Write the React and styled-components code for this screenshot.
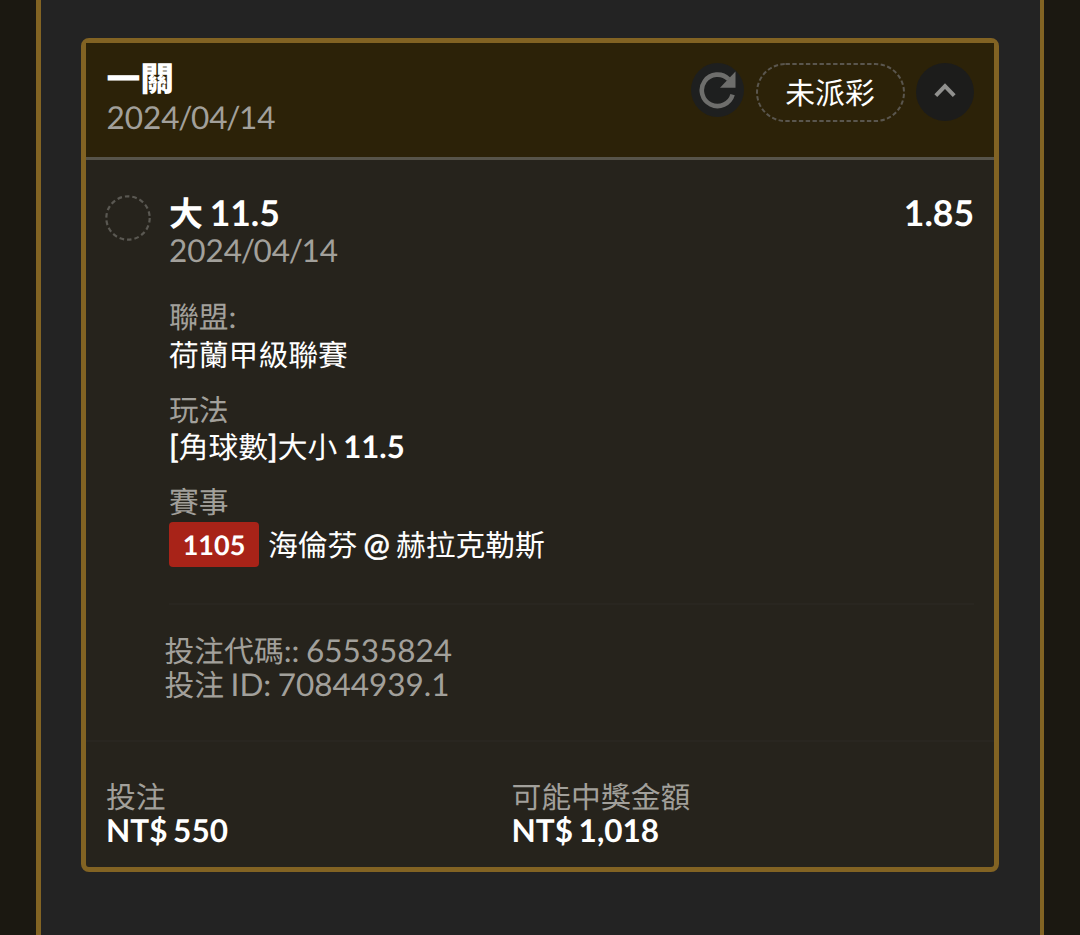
import React from "react";
import styled, { createGlobalStyle } from "styled-components";

function DateLabel({ value }) {
  const [year, month, day] = value.split("/");
  return (
    <DateText>
      {year}
      <Slash>/</Slash>
      {month}
      <Slash>/</Slash>
      {day}
    </DateText>
  );
}

function BetCard({ bet }) {
  return (
    <Card>
      <Header>
        <div>
          <Title>
            <Cjk $size="33.8px">{bet.title}</Cjk>
          </Title>
          <DateLabel value={bet.date} />
        </div>
        <Actions>
          <RefreshButton aria-label="refresh">
            <svg width="38" height="38" viewBox="0 0 38 38">
              <path
                d="M30.6 8.2 A15.7 15.7 0 1 0 34.6 23.6"
                fill="none"
                stroke="#6e6e6c"
                strokeWidth="4.6"
              />
              <path d="M37.5 0.5 V16.7 H22 Z" fill="#6e6e6c" />
            </svg>
          </RefreshButton>
          <Status>
            <svg width="149" height="59" viewBox="0 0 149 59">
              <rect x="1" y="1" width="147" height="57" rx="28.5" />
            </svg>
            <span>{bet.status}</span>
          </Status>
          <ToggleButton aria-label="collapse">
            <svg width="22" height="16" viewBox="0 0 22 16">
              <path
                d="M1.8 12.6 L11 3.2 L20.2 12.6"
                fill="none"
                stroke="#90908e"
                strokeWidth="4"
              />
            </svg>
          </ToggleButton>
        </Actions>
      </Header>
      <Body>
        <Circle viewBox="0 0 46 46">
          <circle cx="23" cy="23" r="21.7" />
        </Circle>
        <Selection>
          <PickRow>
            <Pick>
              <Cjk $size="34px">{bet.pick}</Cjk> {bet.line}
            </Pick>
            <Pick>{bet.odds}</Pick>
          </PickRow>
          <DateLabel value={bet.date} />
          <Field $top="30px">
            <Label>
              <Cjk>聯盟</Cjk>:
            </Label>
            <Value>
              <Cjk>{bet.league}</Cjk>
            </Value>
          </Field>
          <Field>
            <Label>
              <Cjk>玩法</Cjk>
            </Label>
            <Value $tight>
              [<Cjk>角球數</Cjk>]<Cjk>大小</Cjk> <b>{bet.line}</b>
            </Value>
          </Field>
          <Field>
            <Label>
              <Cjk>賽事</Cjk>
            </Label>
            <Match>
              <Badge>{bet.matchNo}</Badge>
              <Value $tight>
                <Cjk>{bet.home}</Cjk> @ <Cjk>{bet.away}</Cjk>
              </Value>
            </Match>
          </Field>
          <Codes>
            <Label $compact>
              <Cjk>投注代碼</Cjk>:: {bet.code}
            </Label>
            <Label $compact>
              <Cjk>投注</Cjk> ID: {bet.id}
            </Label>
          </Codes>
        </Selection>
      </Body>
      <Footer>
        <div>
          <Label $compact>
            <Cjk>投注</Cjk>
          </Label>
          <Amount>NT$ {bet.stake}</Amount>
        </div>
        <div>
          <Label $compact>
            <Cjk>可能中獎金額</Cjk>
          </Label>
          <Amount>NT$ {bet.payout}</Amount>
        </div>
      </Footer>
    </Card>
  );
}

const bet = {
  title: "一關",
  date: "2024/04/14",
  status: "未派彩",
  pick: "大",
  line: "11.5",
  odds: "1.85",
  league: "荷蘭甲級聯賽",
  matchNo: "1105",
  home: "海倫芬",
  away: "赫拉克勒斯",
  code: "65535824",
  id: "70844939.1",
  stake: "550",
  payout: "1,018",
};

export default function App() {
  return (
    <>
      <GlobalStyle />
      <Page>
        <Panel>
          <BetCard bet={bet} />
        </Panel>
      </Page>
    </>
  );
}

const GlobalStyle = createGlobalStyle`
  * {
    box-sizing: border-box;
  }
  body {
    margin: 0;
    background-color: #1b1811;
    font-family: Lato, "Noto Sans CJK TC", sans-serif;
    font-size: 31.5px;
    word-spacing: -2px;
    text-rendering: geometricPrecision;
    overflow: hidden;
  }
  button {
    border: none;
    padding: 0;
    display: flex;
    align-items: center;
    justify-content: center;
    border-radius: 50%;
  }
`;

const Page = styled.div`
  height: 935px;
  padding: 0 36px;
`;

const Panel = styled.div`
  height: 100%;
  padding: 38px 40px 0;
  background-color: #232323;
  border: solid #826323;
  border-width: 0 4px 0 5px;
`;

const Card = styled.div`
  width: 918px;
  height: 834px;
  border: 5px solid #826323;
  border-radius: 8px;
  background-color: #26231c;
`;

const Header = styled.div`
  display: flex;
  justify-content: space-between;
  height: 117px;
  padding: 17px 20px 0 20.5px;
  background-color: #2c2208;
  border-bottom: 3px solid #57544a;
`;

// Chinese glyphs are set a little smaller than the latin text beside them
const Cjk = styled.span`
  font-family: "Noto Sans CJK TC", sans-serif;
  font-size: ${({ $size }) => $size || "29.8px"};
  line-height: 1;
`;

const Title = styled.div`
  color: #fff;
  font-size: 34.5px;
  font-weight: 900;
  line-height: 38px;
`;

const DateText = styled.div`
  color: #a2a09b;
  line-height: 38px;
  height: 37px;
`;

const Slash = styled.span`
  margin: 0 -1.4px;
`;

const Actions = styled.div`
  display: flex;
  gap: 11.5px;
  padding-top: 3px;
`;

const RefreshButton = styled.button`
  width: 53px;
  height: 54px;
  padding-right: 1px;
  background-color: #1e1f1f;
`;

const Status = styled.div`
  display: grid;
  width: 149px;
  height: 59px;
  color: #fff;
  font-family: "Noto Sans CJK TC", sans-serif;
  font-size: 29.8px;
  line-height: 56px;
  text-align: center;
  > * {
    grid-area: 1 / 1;
  }
  rect {
    fill: none;
    stroke: #5a564e;
    stroke-width: 2;
    stroke-dasharray: 4.4 2.4;
  }
`;

const ToggleButton = styled.button`
  width: 58px;
  height: 58px;
  padding-bottom: 2px;
  background-color: #1c1c1b;
`;

const Body = styled.div`
  display: flex;
  gap: 18px;
  height: 580px;
  padding: 34px 20px 0 19px;
`;

const Circle = styled.svg`
  flex: none;
  width: 46px;
  height: 46px;
  margin-top: 1px;
  circle {
    fill: none;
    stroke: #5a5852;
    stroke-width: 2.2;
    stroke-dasharray: 4.6 2.97;
  }
`;

const Selection = styled.div`
  flex: 1;
`;

const PickRow = styled.div`
  display: flex;
  justify-content: space-between;
`;

const Pick = styled.div`
  color: #fff;
  font-size: 35.5px;
  font-weight: 700;
  line-height: 38px;
  height: 37px;
`;

const Field = styled.div`
  margin-top: ${({ $top }) => $top || "18.5px"};
`;

const Label = styled.div`
  color: #a2a09b;
  line-height: ${({ $compact }) => ($compact ? "34px" : "37px")};
`;

// latin characters in values are slightly heavier than the Chinese ones
const Value = styled.div`
  color: #fff;
  line-height: ${({ $tight }) => ($tight ? "36px" : "38px")};
  height: 37px;
  -webkit-text-stroke: 0.6px #fff;
  ${Cjk} {
    -webkit-text-stroke: 0;
  }
  b {
    font-size: 31px;
    font-weight: 700;
    line-height: 1;
    -webkit-text-stroke: 0;
  }
`;

const Match = styled.div`
  display: flex;
  align-items: center;
  gap: 9px;
  height: 45px;
  margin-top: 2px;
`;

const Badge = styled.div`
  width: 90px;
  height: 45px;
  border-radius: 4px;
  background-color: #a82318;
  color: #fff;
  font-size: 27px;
  font-weight: 700;
  line-height: 46px;
  text-align: center;
`;

const Codes = styled.div`
  margin-top: 36px;
  padding-top: 28px;
  border-top: 2px solid #292620;
  word-spacing: -1.6px;
  ${Label} {
    margin-left: -4.5px;
  }
`;

const Footer = styled.div`
  display: grid;
  grid-template-columns: 405.5px 1fr;
  padding: 37px 20px 0;
  border-top: 2px solid #292620;
`;

const Amount = styled.div`
  color: #fff;
  font-weight: 700;
  line-height: 35px;
`;
